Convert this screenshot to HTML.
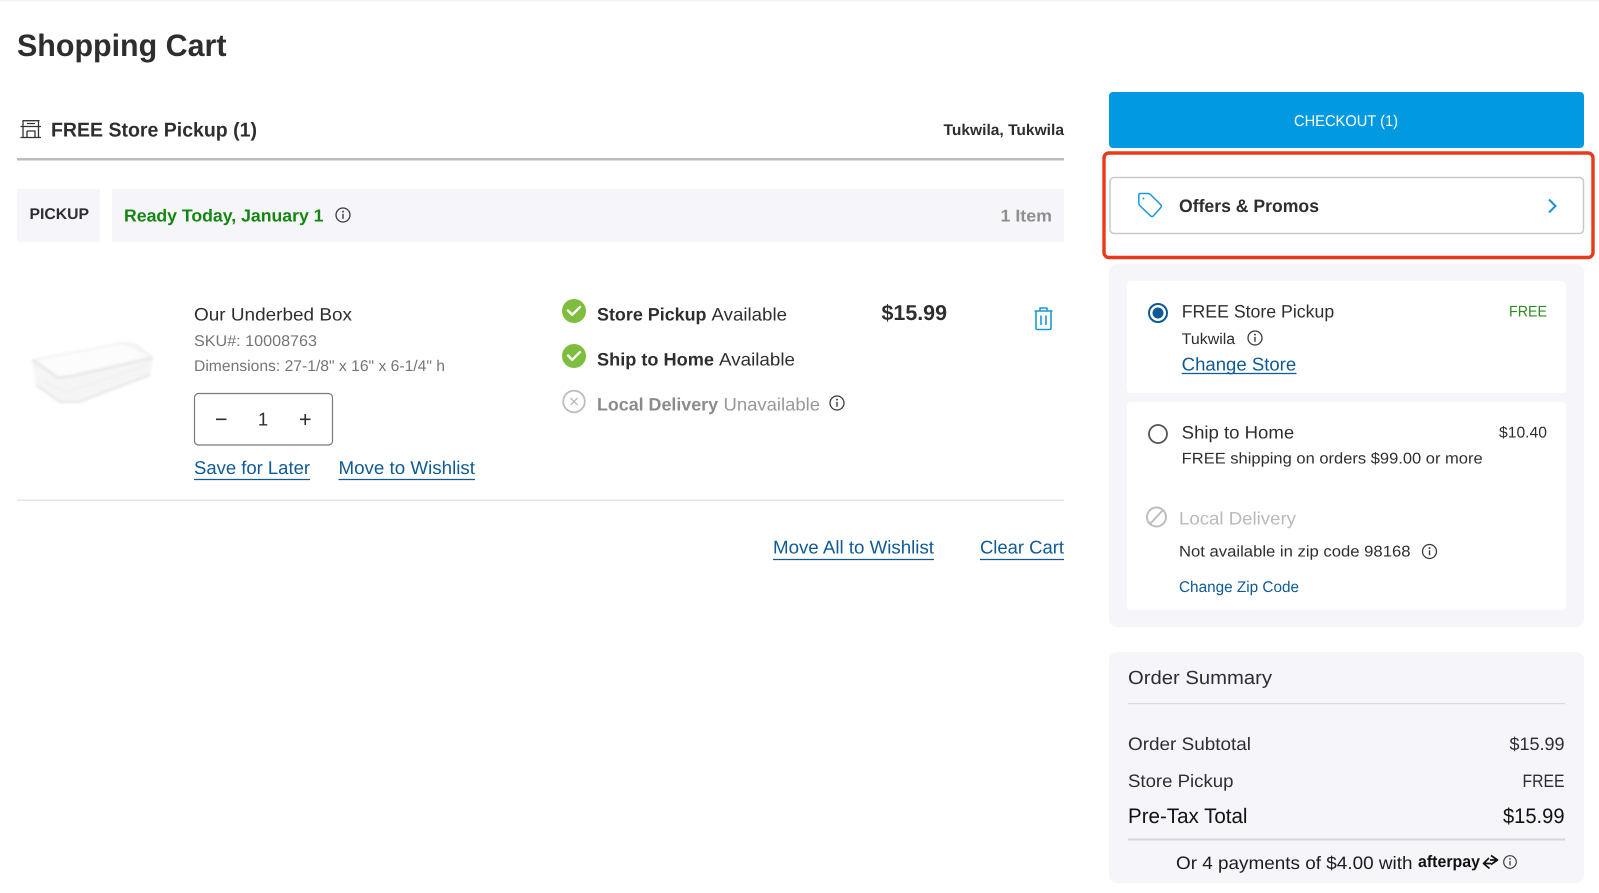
<!DOCTYPE html>
<html lang="en">
<head>
<meta charset="utf-8">
<title>Shopping Cart</title>
<style>
html,body{margin:0;padding:0;background:#fff;width:1599px;height:893px;overflow:hidden}
svg{display:block;position:absolute;left:0;top:0}
text{font-family:"Liberation Sans",Arial,sans-serif;fill:#2d2e30}
.b{font-weight:700}
.l{fill:#0f5a96}
.u{stroke:#0f5a96;stroke-width:1.3;fill:none}
.i{fill:none;stroke:#3c3d3f;stroke-width:1.3}
</style>
</head>
<body>
<svg width="1599" height="893" viewBox="0 0 1599 893" xmlns="http://www.w3.org/2000/svg" text-rendering="geometricPrecision">
<defs>
<g id="info"><circle r="7" class="i"/><rect x="-.7" y="-1.2" width="1.4" height="5" fill="#3c3d3f"/><circle cy="-3.4" r=".95" fill="#3c3d3f"/></g>
<g id="ok"><circle r="12" fill="#7ebd3e"/><path d="M-6-.5l4.2 4.3L6-4" fill="none" stroke="#fff" stroke-width="2.4" stroke-linecap="round" stroke-linejoin="round"/></g>
<filter id="bl"><feGaussianBlur stdDeviation="1.300"/></filter>
</defs>

<rect width="1599" height="1.5" fill="#f3f3f3"/>
<text x="17" y="56" class="b" font-size="31" textLength="209.500" lengthAdjust="spacingAndGlyphs">Shopping Cart</text>

<!-- store icon -->
<g fill="none" stroke="#333" stroke-width="1.3">
<path d="M22.500 120.700H39.500M20.500 137.500H41M20.500 126.500H41M23 120.700V137.500M38.500 120.700V137.500M27 131H35V137.500M27 131V137.500M27 123.500H35"/>
</g>
<text x="51" y="136.700" class="b" font-size="20" textLength="206" lengthAdjust="spacingAndGlyphs">FREE Store Pickup (1)</text>
<text x="943.500" y="135" class="b" font-size="15.500" textLength="120.500" lengthAdjust="spacingAndGlyphs">Tukwila, Tukwila</text>
<rect x="17" y="158" width="1047" height="2.500" fill="#bcbcbc"/>

<rect x="17" y="189" width="83" height="53" fill="#f5f5fa"/>
<text x="29.500" y="219" class="b" font-size="15.500" textLength="59.500" lengthAdjust="spacingAndGlyphs">PICKUP</text>
<rect x="112" y="189" width="952" height="53" fill="#f5f5fa"/>
<text x="124" y="221.500" class="b" font-size="17.500" textLength="199.500" lengthAdjust="spacingAndGlyphs" style="fill:#12860f">Ready Today, January 1</text>
<use href="#info" x="343" y="215"/>
<text x="1000.500" y="221.500" class="b" font-size="17" textLength="51.500" lengthAdjust="spacingAndGlyphs" style="fill:#8f8f8f">1 Item</text>

<!-- product image -->
<g filter="url(#bl)">
<path d="M32 360L122 343L135 344L153 358L150 375L79 402L60 402L36 385Z" fill="#f5f5f5"/>
<path d="M35 358L122 344L149 356L70 375L58 375Z" fill="#fcfcfc"/>
<path d="M32 360L58 378L72 376L153 358" fill="none" stroke="#dedede" stroke-width="1.400"/>
<path d="M36 385L60 402L79 402L150 375" fill="none" stroke="#e0e0e0" stroke-width="1.500"/>
<path d="M32 360L122 343L135 344L153 358" fill="none" stroke="#e8e8e8"/>
<path d="M42 380L66 392L147 365" fill="none" stroke="#ebebeb"/>
</g>

<text x="194" y="320.700" font-size="18" textLength="158" lengthAdjust="spacingAndGlyphs">Our Underbed Box</text>
<text x="194" y="346" font-size="15.500" textLength="123" lengthAdjust="spacingAndGlyphs" style="fill:#757575">SKU#: 10008763</text>
<text x="194" y="371" font-size="15.500" textLength="251" lengthAdjust="spacingAndGlyphs" style="fill:#757575">Dimensions: 27-1/8" x 16" x 6-1/4" h</text>

<rect x="194.500" y="393.500" width="138" height="51.500" rx="4" fill="#fff" stroke="#7a7a7a" stroke-width="1.200"/>
<path d="M216 419.300H226.500M300 419.300H310.500M305.250 414V425" stroke="#2d2e30" stroke-width="1.600" fill="none"/>
<text x="263" y="425.500" font-size="18.500" text-anchor="middle">1</text>

<text x="194" y="474" font-size="18.500" class="l" textLength="116" lengthAdjust="spacingAndGlyphs">Save for Later</text>
<path d="M194 479.500H310" class="u"/>
<text x="338.500" y="474" font-size="18.500" class="l" textLength="136.500" lengthAdjust="spacingAndGlyphs">Move to Wishlist</text>
<path d="M338.500 479.500H475" class="u"/>

<use href="#ok" x="574" y="311"/>
<text x="597" y="320.700" class="b" font-size="18" textLength="109.500" lengthAdjust="spacingAndGlyphs">Store Pickup</text>
<text x="711.500" y="320.700" font-size="18" textLength="75.500" lengthAdjust="spacingAndGlyphs">Available</text>
<use href="#ok" x="574" y="356"/>
<text x="597" y="365.700" class="b" font-size="18" textLength="117" lengthAdjust="spacingAndGlyphs">Ship to Home</text>
<text x="719" y="365.700" font-size="18" textLength="76" lengthAdjust="spacingAndGlyphs">Available</text>
<circle cx="574" cy="401.500" r="10.800" fill="none" stroke="#bdbdbd" stroke-width="1.800"/>
<path d="M570.500 398L577.500 405M577.500 398L570.500 405" stroke="#bdbdbd" stroke-width="1.500" fill="none"/>
<text x="597" y="410.700" class="b" font-size="18" textLength="121" lengthAdjust="spacingAndGlyphs" style="fill:#8b8b8b">Local Delivery</text>
<text x="723.500" y="410.700" font-size="18" textLength="96.500" lengthAdjust="spacingAndGlyphs" style="fill:#979797">Unavailable</text>
<use href="#info" x="837" y="403"/>

<text x="881.500" y="320" class="b" font-size="21.500" textLength="65.500" lengthAdjust="spacingAndGlyphs">$15.99</text>

<g fill="none" stroke="#1a9ad6" stroke-width="1.600" stroke-linejoin="round">
<path d="M1034.500 311H1052.500M1040 311V308H1047V311M1036 311V328Q1036 329.500 1037.500 329.500H1049.500Q1051 329.500 1051 328V311M1041 315.500V325M1046 315.500V325"/>
</g>

<rect x="17" y="499.500" width="1047" height="1.500" fill="#e6e6e6"/>
<text x="773" y="553.500" font-size="18.500" class="l" textLength="161" lengthAdjust="spacingAndGlyphs">Move All to Wishlist</text>
<path d="M773 559.500H934" class="u"/>
<text x="980" y="553.500" font-size="18.500" class="l" textLength="84" lengthAdjust="spacingAndGlyphs">Clear Cart</text>
<path d="M980 559.500H1064" class="u"/>

<!-- checkout -->
<rect x="1109" y="92" width="475" height="56" rx="4" fill="#0099e2"/>
<text x="1294" y="126" font-size="15.500" textLength="104" lengthAdjust="spacingAndGlyphs" style="fill:#fff">CHECKOUT (1)</text>

<!-- offers -->
<rect x="1104" y="153" width="489" height="104.500" rx="5" fill="none" stroke="#e8391a" stroke-width="3.400"/>
<rect x="1110" y="177.500" width="473.500" height="56" rx="4" fill="#fff" stroke="#c9c9c9" stroke-width="1.500"/>
<path d="M1140 193.500H1148Q1149.500 193.500 1150.500 194.500L1160.800 204.800Q1162 206.200 1160.800 207.500L1153.500 215.800Q1152 217.200 1150.500 215.800L1140.200 206Q1138.800 204.600 1138.800 203V195Q1138.800 193.500 1140 193.500Z" fill="none" stroke="#1a9ad6" stroke-width="1.500" stroke-linejoin="round"/>
<circle cx="1143.500" cy="198.500" r="1" fill="#1a9ad6"/>
<text x="1179" y="212" class="b" font-size="18" textLength="140" lengthAdjust="spacingAndGlyphs">Offers &amp; Promos</text>
<path d="M1549 199.500L1555.500 206L1549 212.500" fill="none" stroke="#1a92cf" stroke-width="2"/>

<!-- shipping panel -->
<rect x="1109" y="264" width="475" height="363" rx="8" fill="#f5f5fa"/>
<rect x="1127" y="281" width="439" height="112" rx="4" fill="#fff"/>
<rect x="1127" y="402" width="439" height="208" rx="4" fill="#fff"/>

<circle cx="1158" cy="313" r="9" fill="none" stroke="#0f5a96" stroke-width="2"/>
<circle cx="1158" cy="313" r="5.500" fill="#0f5a96"/>
<text x="1181.700" y="317.700" font-size="18" textLength="152.500" lengthAdjust="spacingAndGlyphs">FREE Store Pickup</text>
<text x="1509" y="316.500" font-size="15.500" textLength="38" lengthAdjust="spacingAndGlyphs" style="fill:#2f8a22">FREE</text>
<text x="1181.700" y="344" font-size="15.500" textLength="53.500" lengthAdjust="spacingAndGlyphs">Tukwila</text>
<use href="#info" x="1255" y="338"/>
<text x="1181.700" y="370.500" font-size="18.500" class="l" textLength="114.500" lengthAdjust="spacingAndGlyphs">Change Store</text>
<path d="M1181.700 373.500H1296.500" class="u"/>

<circle cx="1158" cy="434" r="9" fill="none" stroke="#555" stroke-width="1.800"/>
<text x="1181.700" y="438.700" font-size="18" textLength="112.500" lengthAdjust="spacingAndGlyphs">Ship to Home</text>
<text x="1499" y="437.500" font-size="15.500" textLength="48" lengthAdjust="spacingAndGlyphs">$10.40</text>
<text x="1181.700" y="463.700" font-size="15.500" textLength="301" lengthAdjust="spacingAndGlyphs">FREE shipping on orders $99.00 or more</text>

<circle cx="1156.500" cy="517" r="9.500" fill="none" stroke="#bdbdbd" stroke-width="2"/>
<path d="M1150 524L1163 510" stroke="#bdbdbd" stroke-width="2" fill="none"/>
<text x="1179" y="524.700" font-size="18" textLength="117" lengthAdjust="spacingAndGlyphs" style="fill:#b9b9b9">Local Delivery</text>
<text x="1179" y="556.500" font-size="15.500" textLength="231.500" lengthAdjust="spacingAndGlyphs">Not available in zip code 98168</text>
<use href="#info" x="1429.500" y="551.500"/>
<text x="1179" y="592" font-size="15.500" class="l" textLength="120" lengthAdjust="spacingAndGlyphs">Change Zip Code</text>

<!-- summary -->
<rect x="1109" y="652" width="475" height="231" rx="8" fill="#f5f5fa"/>
<text x="1128" y="684" font-size="19" textLength="144" lengthAdjust="spacingAndGlyphs">Order Summary</text>
<rect x="1128" y="703" width="437" height="1.200" fill="#dcdce0"/>
<text x="1128" y="750" font-size="18" textLength="123" lengthAdjust="spacingAndGlyphs">Order Subtotal</text>
<text x="1509.500" y="750" font-size="18" textLength="55" lengthAdjust="spacingAndGlyphs">$15.99</text>
<text x="1522.500" y="787" font-size="18" textLength="42" lengthAdjust="spacingAndGlyphs">FREE</text>
<text x="1128" y="787" font-size="18" textLength="105.500" lengthAdjust="spacingAndGlyphs">Store Pickup</text>
<text x="1128" y="823" font-size="21" textLength="119.500" lengthAdjust="spacingAndGlyphs" style="fill:#111">Pre-Tax Total</text>
<text x="1503" y="823" font-size="21" textLength="61.500" lengthAdjust="spacingAndGlyphs" style="fill:#111">$15.99</text>
<rect x="1128" y="838.500" width="437" height="2" fill="#d5d5da"/>
<text x="1176" y="869" font-size="18" textLength="236.500" lengthAdjust="spacingAndGlyphs" style="fill:#1c1c1c">Or 4 payments of $4.00 with</text>
<text x="1418" y="867" class="b" font-size="16.500" textLength="62" lengthAdjust="spacingAndGlyphs" style="fill:#111">afterpay</text>
<path d="M1491 855.500L1497.500 860L1491 864.500M1497.500 860H1490M1489 858L1483.500 863.500L1489.500 868.500M1483.500 863.500H1491" fill="none" stroke="#111" stroke-width="1.700" stroke-linejoin="round"/>
<g transform="translate(1510 862) scale(.9)"><use href="#info"/></g>
</svg>
</body>
</html>
